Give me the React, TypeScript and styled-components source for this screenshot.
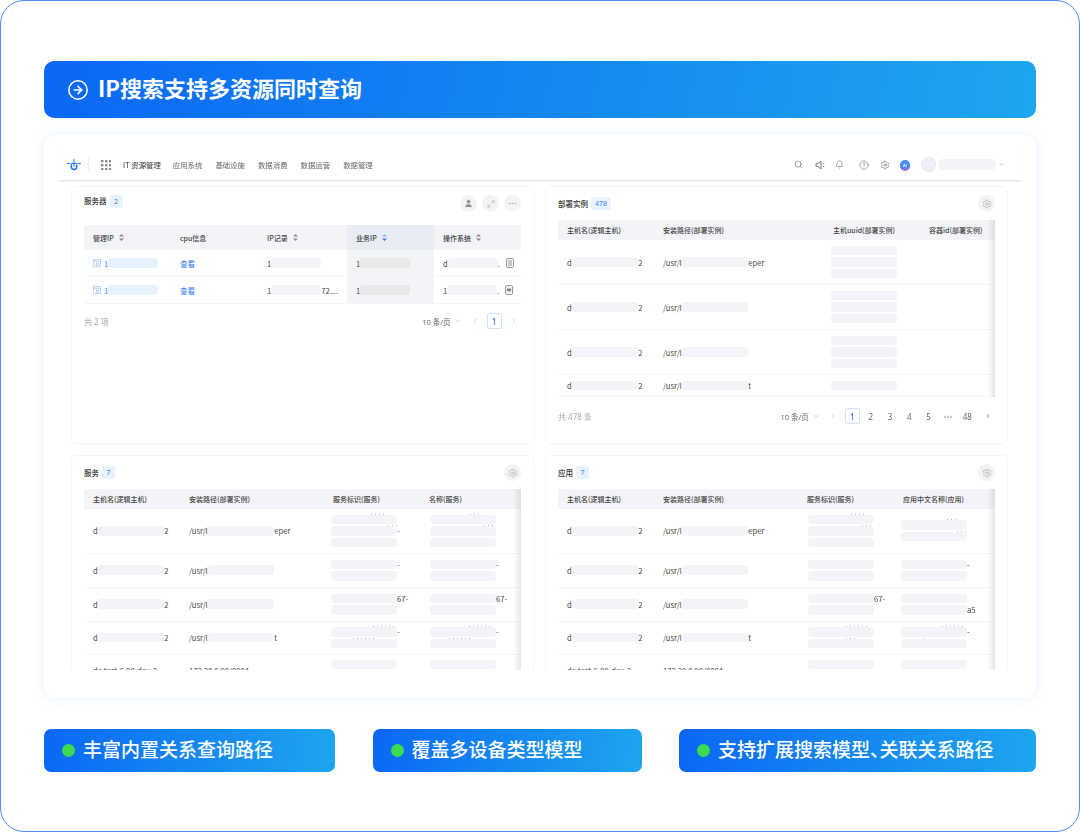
import React from 'react';
import styled, { createGlobalStyle } from 'styled-components';
import {
  Bell,
  ChevronDown,
  ChevronLeft,
  ChevronRight,
  CircleArrowRight,
  CircleHelp,
  Ellipsis,
  Maximize2,
  Search,
  Settings,
  User,
} from 'lucide-react';

const GlobalStyle = createGlobalStyle`
  html, body {
    margin: 0;
    padding: 0;
    background: #fff;
  }
  body {
    font-family: "Noto Sans CJK SC", "Noto Sans", sans-serif;
  }
`;

const Frame = styled.div`
  box-sizing: border-box;
  width: 1080px;
  height: 832px;
  padding: 60px 43px 0;
  border: 1px solid #4b8ef1;
  border-radius: 24px;
  background: #fff;
  overflow: hidden;
`;

const Banner = styled.div`
  display: flex;
  align-items: center;
  gap: 9px;
  height: 57px;
  padding-left: 23px;
  margin-bottom: 17px;
  border-radius: 10px;
  background: linear-gradient(100deg, #0a67f5 0%, #1ea6ee 100%);
  color: #fff;
  font-size: 22px;
  font-weight: 700;
`;

const BannerText = styled.span`
  padding-bottom: 5px;
`;

const Card = styled.div`
  box-sizing: border-box;
  height: 563px;
  padding: 13px 14px 0;
  margin-bottom: 31px;
  border-radius: 12px;
  background: #fff;
  box-shadow: 0 0 12px rgba(90, 150, 255, 0.14);
`;

const Blurred = styled.div`
  filter: blur(0.35px);
`;

const Nav = styled.div`
  display: flex;
  align-items: center;
  box-sizing: border-box;
  height: 32px;
  padding: 1px 17px 0 9px;
  margin-bottom: 6px;
  box-shadow: 0 2px 2px -1px rgba(0, 0, 0, 0.14);
  font-size: 7.4px;
  color: #555;
`;

const NavDivider = styled.span`
  width: 1px;
  height: 13px;
  margin: 0 12px 0 7px;
  background: #ececec;
`;

const AppsSlot = styled.span`
  display: flex;
`;

const NavItem = styled.span<{ $active?: boolean }>`
  color: ${(p) => (p.$active ? '#333' : '#666')};
  margin-left: ${(p) => (p.$active ? '12px' : '0')};
  margin-right: ${(p) => (p.$active ? '12px' : '13px')};
`;

const NavTools = styled.div`
  display: flex;
  align-items: center;
  margin-left: auto;
  color: #555;
`;

const NavTool = styled.span<{ $gap: number }>`
  display: flex;
  margin-left: ${(p) => p.$gap}px;
`;

const AiBadge = styled.span`
  display: flex;
  align-items: center;
  justify-content: center;
  width: 10px;
  height: 10px;
  margin-left: 10px;
  border-radius: 50%;
  background: #4b8cf7;
  box-shadow: 0 1px 0 #d65bd0;
  color: #fff;
  font-size: 4px;
  font-weight: 700;
`;

const Avatar = styled.span`
  width: 13px;
  height: 13px;
  margin-left: 11px;
  border-radius: 50%;
  background: #edf1f9;
  border: 0.5px solid #e2e6ef;
`;

const UserMask = styled.span`
  width: 58px;
  height: 11px;
  margin: 0 2px;
  border-radius: 5px;
  background: #f3f4f7;
`;

const Panels = styled.div`
  display: grid;
  grid-template-columns: 463px 463px;
  column-gap: 11px;
  grid-template-rows: 258px 258px;
  row-gap: 11px;
  height: 484px;
  padding: 0 13px;
  overflow: hidden;
`;

const Panel = styled.section`
  box-sizing: border-box;
  padding: 8px 12px 0;
  border: 1px solid #f5f6f7;
  border-radius: 5px;
  background: #fff;
`;

const PanelHead = styled.div<{ $gap: number; $top?: boolean }>`
  display: flex;
  align-items: ${(p) => (p.$top ? 'flex-start' : 'center')};
  height: 17px;
  margin-bottom: ${(p) => p.$gap}px;
`;

const PanelTitle = styled.span`
  font-size: 7.5px;
  font-weight: 500;
  line-height: 11px;
  color: #333;
`;

const CountBadge = styled.span`
  display: inline-flex;
  align-items: center;
  justify-content: center;
  min-width: 13px;
  box-sizing: border-box;
  height: 13px;
  padding: 0 4px;
  margin-left: 3px;
  border-radius: 2px;
  background: #e8f3ff;
  color: #4a94ff;
  font-family: "Noto Sans", sans-serif;
  font-size: 7px;
  font-weight: 500;
`;

const HeadActions = styled.div`
  display: flex;
  gap: 5px;
  margin-left: auto;
`;

const RoundButton = styled.span`
  display: flex;
  align-items: center;
  justify-content: center;
  width: 17px;
  height: 17px;
  border-radius: 50%;
  background: #f3f3f4;
  color: #999;
`;

const TableWrap = styled.div<{ $h?: number }>`
  position: relative;
  overflow: hidden;
  height: ${(p) => (p.$h ? `${p.$h}px` : 'auto')};
`;

const ScrollShade = styled.span`
  position: absolute;
  top: 0;
  right: 0;
  bottom: 0;
  width: 8px;
  background: linear-gradient(to left, rgba(0, 0, 0, 0.09), rgba(0, 0, 0, 0));
`;

const Row = styled.div<{ $cols: string; $h: number; $head?: boolean }>`
  display: grid;
  grid-template-columns: ${(p) => p.$cols};
  height: ${(p) => p.$h}px;
  box-sizing: border-box;
  background: ${(p) => (p.$head ? '#f3f4f8' : '#fff')};
  border-bottom: ${(p) => (p.$head ? 'none' : '1px solid #f4f5f7')};
`;

const Cell = styled.div<{ $x?: number; $sorted?: boolean; $head?: boolean }>`
  display: flex;
  align-items: center;
  min-width: 0;
  padding-left: ${(p) => p.$x ?? 9}px;
  background: ${(p) => (p.$sorted ? (p.$head ? '#e8ecf3' : '#f3f4f7') : 'transparent')};
  font-size: ${(p) => (p.$head ? '7px' : '7.6px')};
  font-weight: ${(p) => (p.$head ? 500 : 400)};
  color: #444;
  white-space: nowrap;
`;

const Mask = styled.span<{ $w?: number; $tone?: 'plain' | 'blue' | 'dark' }>`
  flex: none;
  width: ${(p) => p.$w ?? 66.5}px;
  height: 9.5px;
  border-radius: 3px;
  background: ${(p) =>
    p.$tone === 'blue' ? '#e6f3ff' : p.$tone === 'dark' ? '#e9e9e9' : '#f3f4f7'};
`;

const Stack = styled.div`
  display: flex;
  flex-direction: column;
  gap: 2px;
`;

const StackLine = styled.div`
  position: relative;
  display: flex;
  align-items: center;
  height: 9.5px;
`;

/* tips of the covered text that stick out above a mask */
const Peek = styled.span<{ $x: number; $w: number }>`
  position: absolute;
  top: -1px;
  left: ${(p) => p.$x}px;
  width: ${(p) => p.$w}px;
  height: 1px;
  background: repeating-linear-gradient(to right, #b8b8b8 0 1px, transparent 1px 4px);
`;

const Link = styled.span`
  color: #2f7df6;
`;

const SortMark = styled.svg`
  flex: none;
  margin-left: 5px;
`;

const RowIcon = styled.svg`
  flex: none;
  margin-right: 3px;
`;

const DocMark = styled.svg`
  flex: none;
  margin-left: 6px;
`;

const Pager = styled.div<{ $top: number }>`
  display: flex;
  align-items: center;
  height: 16px;
  margin-top: ${(p) => p.$top}px;
  font-family: "Noto Sans", "Noto Sans CJK SC", sans-serif;
  font-size: 8px;
  color: #666;
`;

const PagerTotal = styled.span`
  margin-right: auto;
  color: #aaa;
`;

const PagerSize = styled.span`
  display: flex;
  align-items: center;
  gap: 3px;
  font-size: 7.5px;
  margin-right: 5.5px;
`;

const PagerArrow = styled.span<{ $off?: boolean; $prev?: boolean }>`
  display: flex;
  justify-content: center;
  width: 15px;
  margin: ${(p) => (p.$prev ? '0 4.5px 0 0' : '0 0 0 1px')};
  color: ${(p) => (p.$off ? '#c4c4c4' : '#666')};
`;

const PageNum = styled.span<{ $current?: boolean; $muted?: boolean }>`
  display: flex;
  align-items: center;
  justify-content: center;
  box-sizing: border-box;
  width: 15px;
  height: 16px;
  margin-right: ${(p) => (p.$current ? '3.5px' : '4.3px')};
  border: ${(p) => (p.$current ? '1px solid #cfe3ff' : 'none')};
  border-radius: 2px;
  color: ${(p) => (p.$current ? '#2f7df6' : p.$muted ? '#bbb' : '#666')};
  font-weight: ${(p) => (p.$current ? 500 : 400)};
`;

const Tags = styled.div`
  display: flex;
  gap: 37.5px;
`;

const Tag = styled.div<{ $w: number }>`
  display: flex;
  align-items: center;
  gap: 8px;
  box-sizing: border-box;
  width: ${(p) => p.$w}px;
  height: 42.5px;
  padding-left: 18px;
  border-radius: 7px;
  background: linear-gradient(100deg, #0a67f5 0%, #1ea6ee 100%);
  color: #fff;
  font-size: 19px;
  font-weight: 500;
  white-space: nowrap;
`;

const TagText = styled.span`
  padding-bottom: 3px;
`;

const TagDot = styled.span`
  flex: none;
  width: 13px;
  height: 13px;
  border-radius: 50%;
  background: #3bdc4f;
`;

const NarrowMark = styled.span`
  font-feature-settings: 'halt';
`;

const Logo = () => (
  <svg width="14" height="13" viewBox="0 0 14 13" fill="none" stroke="#1670f0" strokeLinecap="round">
    <path d="M0.5 5.5h2.4M4.6 5.5h4.8M11.1 5.5h2.4" strokeWidth="1" />
    <path d="M7 1.5v7" strokeWidth="1" />
    <path d="M4.3 7v1.7a2.7 2.7 0 0 0 5.4 0V7" strokeWidth="1.5" />
  </svg>
);

const AppsIcon = () => (
  <svg width="10" height="10" viewBox="0 0 10 10" fill="#8a8a8a">
    {[0, 4, 8].map((y) =>
      [0, 4, 8].map((x) => <rect key={`${x}-${y}`} x={x} y={y} width="2.4" height="2.4" />),
    )}
  </svg>
);

const SpeakerIcon = () => (
  <svg width="11" height="10" viewBox="0 0 11 10" fill="none" stroke="currentColor" strokeWidth="0.8">
    <path d="M1 3.6h1.8L6 1.2v7.6L2.8 6.4H1z" strokeLinejoin="round" />
    <path d="M7.8 3.6h1.4M7.8 6.4h1.4" />
  </svg>
);

const SortIcon = ({ active }: { active?: boolean }) => (
  <SortMark width="5" height="7" viewBox="0 0 5 7">
    <path d="M2.5 0L5 2.6H0z" fill={active ? '#9db4d8' : '#8c8c8c'} />
    <path d="M2.5 7L0 4.4h5z" fill={active ? '#2f7df6' : '#8c8c8c'} />
  </SortMark>
);

const HostIcon = () => (
  <RowIcon width="8" height="8" viewBox="0 0 8 8" fill="none" stroke="#8fbcf5" strokeWidth="0.7">
    <rect x="0.4" y="0.4" width="7.2" height="7.2" rx="0.6" />
    <path d="M0.4 2.2h7.2" />
    <circle cx="4.6" cy="5" r="1.3" />
  </RowIcon>
);

const DocIcon = ({ solid }: { solid?: boolean }) => (
  <DocMark width="8" height="10" viewBox="0 0 8 10" fill="none" stroke="#808080" strokeWidth="0.8">
    <rect x="0.5" y="0.5" width="7" height="9" rx="1.2" fill="#f4f4f4" />
    {solid ? (
      <rect x="2" y="3.6" width="4" height="2.6" fill="#808080" stroke="none" />
    ) : (
      <path d="M2 3h4M2 5h4M2 7h4" />
    )}
  </DocMark>
);

type Line = { tail?: string; peek?: [number, number] };
type TableRow = { h: number; path?: string; c3: Line[]; c4: Line[]; clipped?: boolean };

const lines = (...tails: (string | undefined)[]): Line[] => tails.map((tail) => ({ tail }));

const StackCell = ({ x, items }: { x: number; items: Line[] }) => (
  <Cell $x={x}>
    <Stack>
      {items.map((l, i) => (
        <StackLine key={i}>
          <Mask />
          {l.tail}
          {l.peek && <Peek $x={l.peek[0]} $w={l.peek[1]} />}
        </StackLine>
      ))}
    </Stack>
  </Cell>
);

const HostTable = ({
  cols,
  heads,
  rows,
  xs,
  h,
}: {
  cols: string;
  heads: string[];
  rows: TableRow[];
  xs: [number, number];
  h: number;
}) => (
  <TableWrap $h={h}>
    <Row $cols={cols} $h={20} $head>
      {heads.map((t) => (
        <Cell key={t} $head>
          {t}
        </Cell>
      ))}
    </Row>
    {rows.map((r, i) => (
      <Row key={i} $cols={cols} $h={r.h}>
        {r.clipped ? (
          <>
            <Cell>dc-test-6-98-dev-2</Cell>
            <Cell>172.20.0.98/8004</Cell>
          </>
        ) : (
          <>
            <Cell>
              d<Mask />2
            </Cell>
            <Cell>
              /usr/l
              <Mask />
              {r.path}
            </Cell>
          </>
        )}
        <StackCell x={xs[0]} items={r.c3} />
        <StackCell x={xs[1]} items={r.c4} />
      </Row>
    ))}
    <ScrollShade />
  </TableWrap>
);

const instanceRows: TableRow[] = [
  { h: 45, path: 'eper', c3: lines(undefined, undefined, undefined), c4: [] },
  { h: 45, c3: lines(undefined, undefined, undefined), c4: [] },
  { h: 45, c3: lines(undefined, undefined, undefined), c4: [] },
  { h: 22, path: 't', c3: lines(undefined), c4: [] },
];

const serviceRows: TableRow[] = [
  {
    h: 44.6,
    path: 'eper',
    c3: [{ peek: [40, 15] }, { tail: '-', peek: [57, 9] }, {}],
    c4: [{ peek: [40, 12] }, { peek: [54, 9] }, {}],
  },
  { h: 34, c3: lines('-', undefined), c4: lines('-', undefined) },
  { h: 34, c3: lines('67-', undefined), c4: lines('67-', undefined) },
  {
    h: 33,
    path: 't',
    c3: [{ tail: '-', peek: [42, 24] }, { peek: [22, 24] }],
    c4: [{ tail: '-', peek: [39, 24] }, { peek: [19, 24] }],
  },
  { h: 32, clipped: true, c3: lines(undefined, undefined), c4: lines(undefined, undefined) },
];

const appRows: TableRow[] = [
  {
    h: 44.6,
    path: 'eper',
    c3: [{ peek: [43, 15] }, { peek: [54, 9] }, {}],
    c4: [{ peek: [46, 12] }, { peek: [56, 9] }],
  },
  { h: 34, c3: lines(undefined, undefined), c4: lines('-', undefined) },
  { h: 34, c3: lines('67-', undefined), c4: lines(undefined, 'a5') },
  {
    h: 33,
    path: 't',
    c3: [{ peek: [38, 24] }, { peek: [38, 10] }],
    c4: [{ tail: '-', peek: [41, 24] }, { peek: [22, 4] }],
  },
  { h: 32, clipped: true, c3: lines(undefined, undefined), c4: lines(undefined, undefined) },
];

const serverCols = '87px 87px 89px 87px 87px';
const serverRows = [
  { os: 'd', solid: false },
  { ip3: '72....', os: '1', solid: true },
];

const GearButton = () => (
  <HeadActions>
    <RoundButton>
      <Settings size={10} strokeWidth={1.2} />
    </RoundButton>
  </HeadActions>
);

export default function App() {
  return (
    <>
      <GlobalStyle />
      <Frame>
        <Banner>
          <CircleArrowRight size={22} strokeWidth={1.7} />
          <BannerText>IP搜索支持多资源同时查询</BannerText>
        </Banner>

        <Card>
          <Blurred>
            <Nav>
              <Logo />
              <NavDivider />
              <AppsSlot>
                <AppsIcon />
              </AppsSlot>
              <NavItem $active>IT 资源管理</NavItem>
              <NavItem>应用系统</NavItem>
              <NavItem>基础设施</NavItem>
              <NavItem>数据消费</NavItem>
              <NavItem>数据运营</NavItem>
              <NavItem>数据管理</NavItem>
              <NavTools>
                <NavTool $gap={0}>
                  <Search size={9} strokeWidth={1.5} />
                </NavTool>
                <NavTool $gap={12}>
                  <SpeakerIcon />
                </NavTool>
                <NavTool $gap={9}>
                  <Bell size={9} strokeWidth={1.3} />
                </NavTool>
                <NavTool $gap={15}>
                  <CircleHelp size={10} strokeWidth={1.2} />
                </NavTool>
                <NavTool $gap={11}>
                  <Settings size={10} strokeWidth={1.2} />
                </NavTool>
                <AiBadge>AI</AiBadge>
                <Avatar />
                <UserMask />
                <ChevronDown size={7} color="#7fb0f0" strokeWidth={2} />
              </NavTools>
            </Nav>

            <Panels>
              <Panel>
                <PanelHead $gap={13} $top>
                  <PanelTitle>服务器</PanelTitle>
                  <CountBadge>2</CountBadge>
                  <HeadActions>
                    <RoundButton>
                      <User size={9} fill="#8f8f8f" color="#8f8f8f" />
                    </RoundButton>
                    <RoundButton>
                      <Maximize2 size={8} strokeWidth={1.4} />
                    </RoundButton>
                    <RoundButton>
                      <Ellipsis size={9} strokeWidth={1.4} />
                    </RoundButton>
                  </HeadActions>
                </PanelHead>
                <TableWrap>
                  <Row $cols={serverCols} $h={25} $head>
                    <Cell $head>
                      管理IP
                      <SortIcon />
                    </Cell>
                    <Cell $head>cpu信息</Cell>
                    <Cell $head>
                      IP记录
                      <SortIcon />
                    </Cell>
                    <Cell $head $sorted>
                      业务IP
                      <SortIcon active />
                    </Cell>
                    <Cell $head>
                      操作系统
                      <SortIcon />
                    </Cell>
                  </Row>
                  {serverRows.map((r, i) => (
                    <Row key={i} $cols={serverCols} $h={27}>
                      <Cell>
                        <HostIcon />
                        <Link>1</Link>
                        <Mask $w={50} $tone="blue" />
                      </Cell>
                      <Cell>
                        <Link>查看</Link>
                      </Cell>
                      <Cell>
                        1<Mask $w={50} />
                        {r.ip3}
                      </Cell>
                      <Cell $sorted>
                        1<Mask $w={50} $tone="dark" />
                      </Cell>
                      <Cell>
                        {r.os}
                        <Mask $w={50} />.
                        <DocIcon solid={r.solid} />
                      </Cell>
                    </Row>
                  ))}
                </TableWrap>
                <Pager $top={9}>
                  <PagerTotal>共 2 项</PagerTotal>
                  <PagerSize>
                    10 条/页 <ChevronDown size={8} color="#bbb" />
                  </PagerSize>
                  <PagerArrow $off $prev>
                    <ChevronLeft size={8} />
                  </PagerArrow>
                  <PageNum $current>1</PageNum>
                  <PagerArrow $off>
                    <ChevronRight size={8} />
                  </PagerArrow>
                </Pager>
              </Panel>

              <Panel>
                <PanelHead $gap={8}>
                  <PanelTitle>部署实例</PanelTitle>
                  <CountBadge>478</CountBadge>
                  <GearButton />
                </PanelHead>
                <HostTable
                  cols="96px 170px 96px 75px"
                  heads={['主机名(逻辑主机)', '安装路径(部署实例)', '主机uuid(部署实例)', '容器id(部署实例)']}
                  rows={instanceRows}
                  xs={[6.5, 9]}
                  h={177}
                />
                <Pager $top={11}>
                  <PagerTotal>共 478 条</PagerTotal>
                  <PagerSize>
                    10 条/页 <ChevronDown size={8} color="#bbb" />
                  </PagerSize>
                  <PagerArrow $off $prev>
                    <ChevronLeft size={8} />
                  </PagerArrow>
                  <PageNum $current>1</PageNum>
                  <PageNum>2</PageNum>
                  <PageNum>3</PageNum>
                  <PageNum>4</PageNum>
                  <PageNum>5</PageNum>
                  <PageNum $muted>•••</PageNum>
                  <PageNum>48</PageNum>
                  <PagerArrow>
                    <ChevronRight size={8} />
                  </PagerArrow>
                </Pager>
              </Panel>

              <Panel>
                <PanelHead $gap={8}>
                  <PanelTitle>服务</PanelTitle>
                  <CountBadge>7</CountBadge>
                  <GearButton />
                </PanelHead>
                <HostTable
                  cols="96px 144px 96px 101px"
                  heads={['主机名(逻辑主机)', '安装路径(部署实例)', '服务标识(服务)', '名称(服务)']}
                  rows={serviceRows}
                  xs={[6.5, 9.5]}
                  h={220}
                />
              </Panel>

              <Panel>
                <PanelHead $gap={8}>
                  <PanelTitle>应用</PanelTitle>
                  <CountBadge>7</CountBadge>
                  <GearButton />
                </PanelHead>
                <HostTable
                  cols="96px 144px 96px 101px"
                  heads={['主机名(逻辑主机)', '安装路径(部署实例)', '服务标识(服务)', '应用中文名称(应用)']}
                  rows={appRows}
                  xs={[9.5, 6.5]}
                  h={220}
                />
              </Panel>
            </Panels>
          </Blurred>
        </Card>

        <Tags>
          <Tag $w={291}>
            <TagDot />
            <TagText>丰富内置关系查询路径</TagText>
          </Tag>
          <Tag $w={269}>
            <TagDot />
            <TagText>覆盖多设备类型模型</TagText>
          </Tag>
          <Tag $w={357}>
            <TagDot />
            <TagText>
              支持扩展搜索模型<NarrowMark>、</NarrowMark>关联关系路径
            </TagText>
          </Tag>
        </Tags>
      </Frame>
    </>
  );
}
